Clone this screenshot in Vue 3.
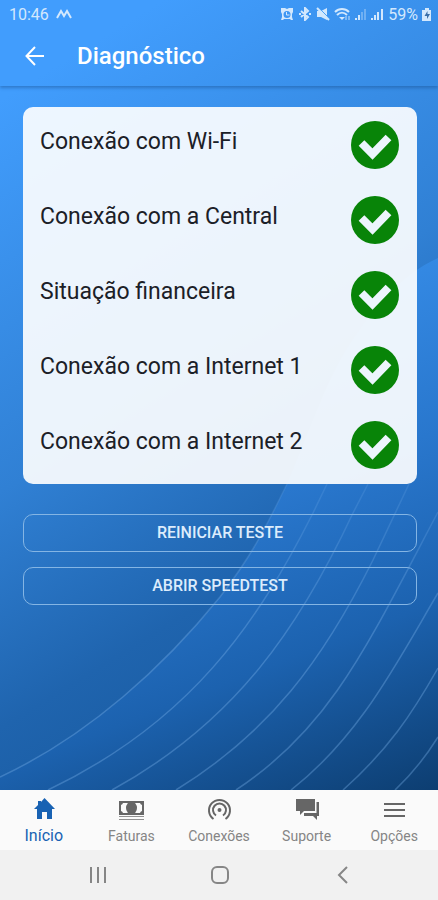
<script setup>
import { ref } from 'vue'

const checks = [
  'Conexão com Wi-Fi',
  'Conexão com a Central',
  'Situação financeira',
  'Conexão com a Internet 1',
  'Conexão com a Internet 2'
]

const tabs = [
  { id: 'inicio', label: 'Início' },
  { id: 'faturas', label: 'Faturas' },
  { id: 'conexoes', label: 'Conexões' },
  { id: 'suporte', label: 'Suporte' },
  { id: 'opcoes', label: 'Opções' }
]
const active = ref('inicio')
</script>

<template>
  <div class="screen">
    <div class="stage">
      <svg class="backdrop" viewBox="0 0 438 790" preserveAspectRatio="none" aria-hidden="true">
        <defs>
          <linearGradient id="base" gradientUnits="userSpaceOnUse" x1="0" y1="100" x2="350" y2="670">
            <stop offset="0" stop-color="#419dfd" />
            <stop offset="0.5" stop-color="#3080d4" />
            <stop offset="0.8" stop-color="#1f64ae" />
            <stop offset="1" stop-color="#195ba1" />
          </linearGradient>
          <linearGradient id="band" gradientUnits="userSpaceOnUse" x1="270" y1="300" x2="460" y2="790">
            <stop offset="0" stop-color="#358be6" />
            <stop offset="0.35" stop-color="#2977cd" />
            <stop offset="0.65" stop-color="#1c62af" />
            <stop offset="1" stop-color="#0c3c6e" />
          </linearGradient>
          <linearGradient id="line" gradientUnits="userSpaceOnUse" x1="0" y1="470" x2="0" y2="640">
            <stop offset="0" stop-color="#7db4ec" stop-opacity="0.15" />
            <stop offset="1" stop-color="#7db4ec" stop-opacity="0.35" />
          </linearGradient>
        </defs>
        <rect width="438" height="790" fill="url(#base)" />
        <path d="M0 777C90 735 165 665 220 597C256 550 268 522 287 484C310 430 325 385 345 352C370 312 400 275 438 258V790H0Z" fill="url(#band)" />
        <g class="waves">
          <path d="M0 777C90 735 165 665 220 597C256 550 268 522 287 484" />
          <path d="M48 790C190 722 257 624 313 513L327 484" />
          <path d="M112 790C236 722 300 626 353 513L368 484" />
          <path d="M176 790C270 732 323 660 373 560L409 484" />
          <path d="M236 790C330 728 366 648 438 512" />
          <path d="M291 790C360 736 396 664 438 593" />
          <path d="M343 790C388 750 412 714 438 668" />
          <path d="M395 790C412 774 425 758 438 737" />
        </g>
      </svg>

      <div class="status">
        <div class="status-side">
          <span>10:46</span>
          <svg width="16" height="12" viewBox="0 0 16 12" fill="none" stroke="currentColor" stroke-width="2">
            <path d="M1 10 5 3 8 8 11 3 15 10" />
          </svg>
        </div>
        <div class="status-side status-right">
          <svg width="14" height="14" viewBox="0 0 14 14" fill="currentColor">
            <path fill-rule="evenodd" d="M1 1h4l2 1 2-1h4v4l-1 2v3l1 3h-2l-1-1H4l-1 1H1l1-3V7L1 5ZM7 4a3.500 3.500 0 1 0 0 7 3.500 3.500 0 0 0 0-7Z" />
            <path d="M6.500 5v3h3" fill="none" stroke="currentColor" />
          </svg>
          <svg width="14" height="14" viewBox="0 0 14 14" fill="none" stroke="currentColor" stroke-width="2">
            <path d="m3 4 7 6-3 3V1l3 3-7 6M1 7h2M11 7h2" />
          </svg>
          <svg width="14" height="14" viewBox="0 0 14 14" fill="currentColor">
            <path d="M1 4h4l6-3v12L5 10H1Z" />
            <path d="m2 0 12 12" stroke="#419bf8" />
            <path d="m1 1 12 12" stroke="currentColor" stroke-width="2" />
          </svg>
          <svg width="17" height="14" viewBox="0 0 17 14" fill="none" stroke="currentColor" stroke-width="2">
            <path d="M1 5C5 1 11 1 15 5M3 8c3-3 7-3 10 0" />
            <path d="m5 10 3 3 3-3Z" fill="currentColor" stroke="none" />
            <path d="M12 13V9m3 4V9" opacity=".45" />
          </svg>
          <svg width="12" height="14" viewBox="0 0 12 14" fill="currentColor">
            <path d="M0 11h2v2H0zM3 8h2v5H3z" />
            <path d="M6 5h2v8H6zM9 2h2v11H9z" opacity=".35" />
          </svg>
          <svg width="13" height="14" viewBox="0 0 13 14" fill="currentColor">
            <path d="M0 11h2v2H0zM3 8h2v5H3zM6 5h2v8H6zM10 2h2v11h-2z" />
          </svg>
          <span>59%</span>
          <svg width="10" height="14" viewBox="0 0 10 14" fill="currentColor">
            <path d="M3 1h4v2h2v11H0V3h3z" />
            <path d="M5.500 4 2.500 9H5v3l3-5H5.500z" fill="#3a6ea8" />
          </svg>
        </div>
      </div>

      <header class="bar">
        <button class="back" type="button" aria-label="Voltar">
          <svg width="20" height="20" viewBox="0 0 20 20" fill="none" stroke="currentColor" stroke-width="2">
            <path d="M20 10H3M11 1 2.500 10 11 19" />
          </svg>
        </button>
        <h1>Diagnóstico</h1>
      </header>

      <main class="content">
        <ul class="card">
          <li v-for="item in checks" :key="item" class="check">
            <span class="check-label">{{ item }}</span>
            <svg class="ok" viewBox="0 0 48 48" role="img" aria-label="OK">
              <circle cx="24" cy="24" r="24" fill="#088408" />
              <path d="M10.500 22 21.500 33 37.500 16.500" fill="none" stroke="#ecf5fd" stroke-width="8" />
            </svg>
          </li>
        </ul>
        <div class="actions">
          <button type="button">REINICIAR TESTE</button>
          <button type="button">ABRIR SPEEDTEST</button>
        </div>
      </main>
    </div>

    <nav class="tabs">
      <a v-for="tab in tabs" :key="tab.id" :href="'#' + tab.id" class="tab" :class="{ active: tab.id === active }" @click.prevent="active = tab.id">
        <svg v-if="tab.id === 'inicio'" width="26" height="24" viewBox="0 0 26 24" fill="currentColor">
          <path d="M13.500 1 24 12h-3v10h-5v-7h-5v7H6V12H3l4-4V4h3v1Z" />
        </svg>
        <svg v-else-if="tab.id === 'faturas'" width="26" height="24" viewBox="0 0 26 24">
          <path fill="currentColor" d="M1 4h25v14H1z" />
          <path fill="#fafafa" d="M5 6h17a3 3 0 0 0 2 2v6a3 3 0 0 0-2 2H5a3 3 0 0 0-2-2V8a3 3 0 0 0 2-2Z" />
          <ellipse cx="13.500" cy="11" rx="5.500" ry="6.500" fill="currentColor" />
          <path d="M1 19.500h25M1 22.500h25" stroke="currentColor" opacity=".7" />
        </svg>
        <svg v-else-if="tab.id === 'conexoes'" width="26" height="24" viewBox="0 0 26 24" fill="none" stroke="currentColor" stroke-width="2">
          <path d="M7.500 22a10.500 10.500 0 1 1 12 0M10 18.500a6.500 6.500 0 1 1 7 0" />
          <circle cx="13.500" cy="13" r="2" fill="currentColor" stroke="none" />
        </svg>
        <svg v-else-if="tab.id === 'suporte'" width="26" height="24" viewBox="0 0 26 24" fill="currentColor">
          <path d="M2 2h19v12H10l-4 4v-4H2z" />
          <path d="M22.500 5H25v14h-2v4l-4-4h-9v-3h12.500z" />
        </svg>
        <svg v-else width="26" height="24" viewBox="0 0 26 24" fill="none" stroke="currentColor" stroke-width="2">
          <path d="M3 7h21M3 13h21M3 19h21" />
        </svg>
        <span>{{ tab.label }}</span>
      </a>
    </nav>

    <div class="system">
      <button type="button" aria-label="Recentes">
        <svg width="20" height="20" viewBox="0 0 20 20" stroke="currentColor" stroke-width="2"><path d="M3 2v16M10 2v16M17 2v16" /></svg>
      </button>
      <button type="button" aria-label="Tela inicial">
        <svg width="20" height="20" viewBox="0 0 20 20" fill="none" stroke="currentColor" stroke-width="2"><rect x="2" y="2" width="16" height="16" rx="5" /></svg>
      </button>
      <button type="button" aria-label="Voltar à tela anterior">
        <svg width="20" height="20" viewBox="0 0 20 20" fill="none" stroke="currentColor" stroke-width="2"><path d="m15 2-8 8 8 8" /></svg>
      </button>
    </div>
  </div>
</template>

<style>
body {
  margin: 0;
}
</style>

<style scoped>
.screen {
  display: flex;
  flex-direction: column;
  min-height: 100vh;
  font-family: Roboto, "Liberation Sans", sans-serif;
}
button {
  display: flex;
  align-items: center;
  justify-content: center;
  padding: 0;
  border: 0;
  background: none;
  color: inherit;
  font: inherit;
  cursor: pointer;
}
.stage {
  position: relative;
  isolation: isolate;
  display: flex;
  flex: 1;
  flex-direction: column;
  color: #fff;
}
.backdrop {
  position: absolute;
  inset: 0;
  z-index: -1;
  width: 100%;
  height: 100%;
}
.waves {
  fill: none;
  stroke: url(#line);
  stroke-width: 1.5;
}
.status {
  display: flex;
  justify-content: space-between;
  height: 28px;
  padding: 0 6px 0 9px;
  color: #d3e8fd;
  font-size: 16px;
}
.status-side {
  display: flex;
  align-items: center;
  gap: 7px;
}
.status-right {
  gap: 4px;
}
.bar {
  display: flex;
  align-items: center;
  gap: 33px;
  height: 56px;
  padding: 0 24px 2px;
  box-shadow: 0 2px 3px rgba(20, 70, 130, 0.4);
  clip-path: inset(0 0 -6px 0);
}
h1 {
  margin: 0;
  font-size: 24px;
  font-weight: 500;
  line-height: 32px;
}
.content {
  display: flex;
  flex-direction: column;
  gap: 30px;
  padding: 21px 21px 24px 23px;
}
.card {
  display: flex;
  flex-direction: column;
  gap: 27px;
  margin: 0;
  padding: 14px 18px 15px 17px;
  border-radius: 10px;
  background: rgba(255, 255, 255, 0.91);
  color: #1b2027;
  list-style: none;
}
.check {
  display: flex;
  justify-content: space-between;
}
.check-label {
  font-size: 23px;
  line-height: 42px;
}
.ok {
  flex: none;
  width: 48px;
  height: 48px;
}
.actions {
  display: flex;
  flex-direction: column;
  gap: 15px;
}
.actions button {
  height: 38px;
  padding-bottom: 2px;
  border: 1px solid #84b5e4;
  border-radius: 10px;
  color: #dcecfc;
  font-size: 16px;
  font-weight: 500;
}
.tabs {
  display: grid;
  grid-template-columns: repeat(5, 1fr);
  height: 60px;
  background: #fafafa;
}
.tab {
  display: flex;
  flex-direction: column;
  align-items: center;
  gap: 5px;
  padding-top: 7px;
  color: #666;
  font-size: 14px;
  line-height: 20px;
  text-decoration: none;
}
.tab span {
  color: #858585;
}
.tab.active,
.tab.active span {
  color: #1862b3;
}
.tab.active {
  font-size: 16px;
}
.system {
  display: flex;
  align-items: center;
  justify-content: space-around;
  height: 50px;
  padding: 0 35px 0 37px;
  background: #f1f1f1;
  color: #868686;
}
</style>
